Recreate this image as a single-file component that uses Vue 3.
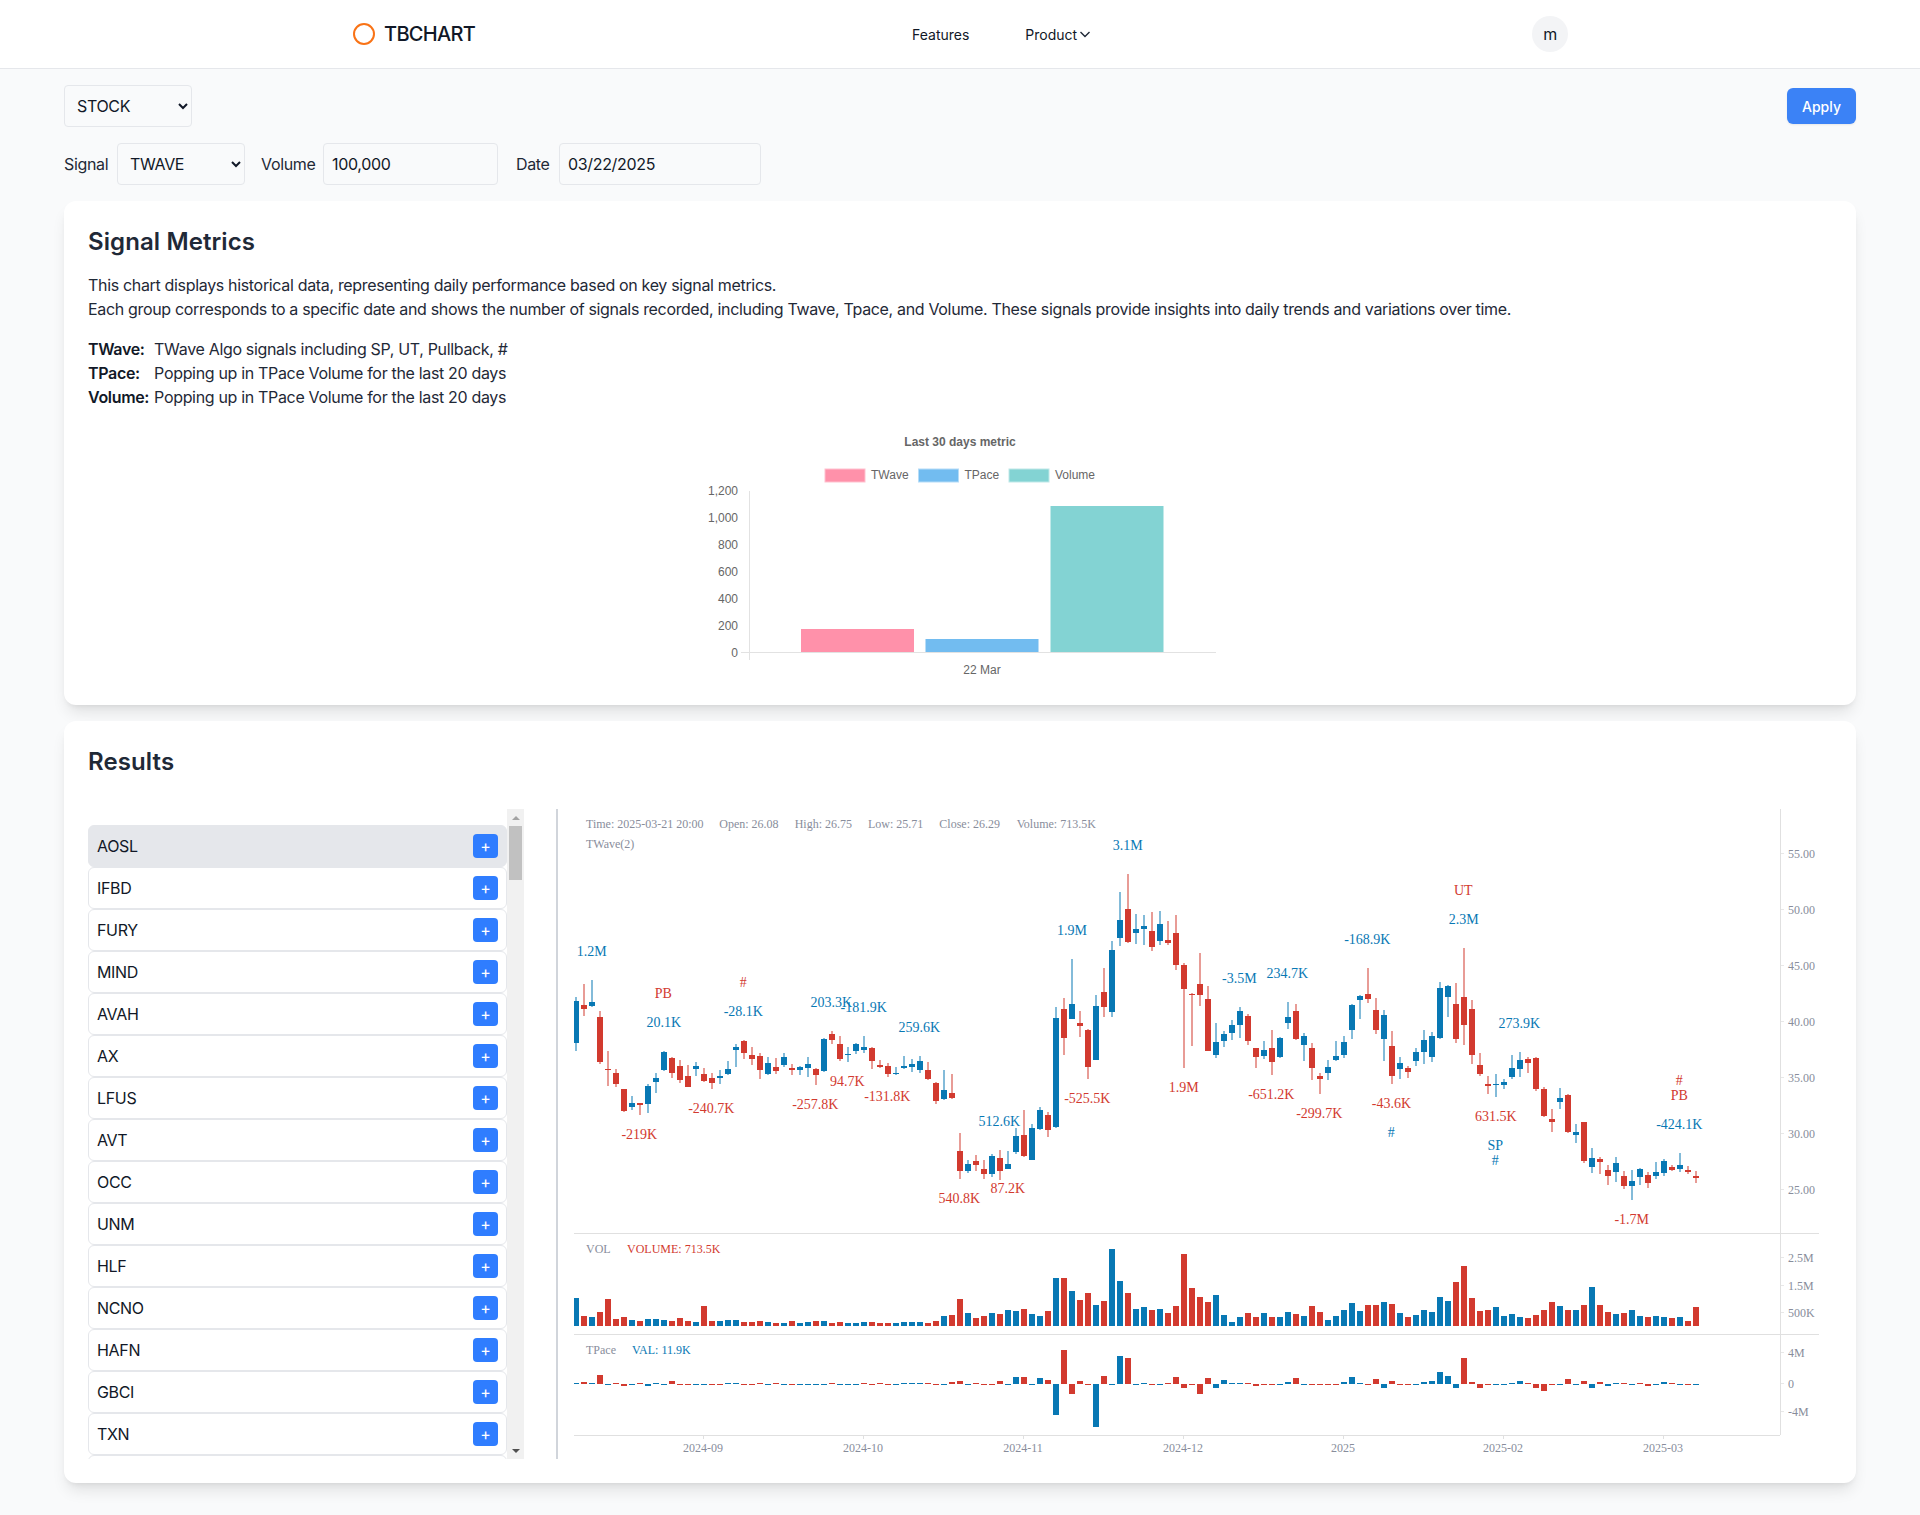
<template>
  <div class="page">
    <header class="topbar">
      <div class="topbar-inner">
        <div class="logo">
          <span class="logo-ring"></span>
          <span class="logo-text">TBCHART</span>
        </div>
        <nav class="nav">
          <a class="nav-link">Features</a>
          <a class="nav-link product">
            Product
            <svg width="12" height="12" viewBox="0 0 12 12"><path d="M1.5 4l4.5 4.5L10.5 4" fill="none" stroke="#1f2937" stroke-width="1.4" /></svg>
          </a>
        </nav>
        <div class="avatar">m</div>
      </div>
    </header>

    <main class="content">
      <div class="toolbar">
        <select class="field market">
          <option>STOCK</option>
          <option>ETF</option>
        </select>
        <button class="apply">Apply</button>
      </div>

      <div class="filters">
        <label class="filter-label signal-label">Signal</label>
        <select class="field market">
          <option>TWAVE</option>
          <option>TPACE</option>
        </select>
        <label class="filter-label volume-label">Volume</label>
        <input class="field volume" value="100,000" />
        <label class="filter-label date-label">Date</label>
        <input class="field date" value="03/22/2025" />
      </div>

      <section class="card">
        <h2 class="card-title">Signal Metrics</h2>
        <p class="intro">
          This chart displays historical data, representing daily performance based on key signal metrics.<br />
          Each group corresponds to a specific date and shows the number of signals recorded, including Twave, Tpace, and Volume. These signals provide insights into daily trends and variations over time.
        </p>
        <dl class="legend-text">
          <template v-for="d in definitions" :key="d.name">
            <dt>{{ d.name }}:</dt>
            <dd>{{ d.text }}</dd>
          </template>
        </dl>

        <svg class="metric-chart" viewBox="660 420 600 261" width="600" height="261">
          <text class="metric-title" x="960" y="445.5" text-anchor="middle">Last 30 days metric</text>
          <g v-for="l in metricLegend" :key="l.name">
            <rect :x="l.x" y="469" width="40" height="13" :fill="l.fill" :stroke="l.edge" />
            <text class="metric-label" :x="l.x + 46" y="479">{{ l.name }}</text>
          </g>
          <g v-for="(t, i) in metricTicks" :key="t">
            <text class="metric-label" x="738" :y="656.5 - i * 27" text-anchor="end">{{ t }}</text>
          </g>
          <path d="M749.5 491V660M741 652.5H1216" stroke="#e2e2e2" stroke-width="1" fill="none" />
          <rect v-for="b in metricBars" :key="b.x" :x="b.x" :y="b.y" width="113" :height="652 - b.y" :fill="b.fill" />
          <text class="metric-label" x="982" y="674" text-anchor="middle">22 Mar</text>
        </svg>
      </section>

      <section class="card">
        <h2 class="card-title">Results</h2>
        <div class="results">
          <div class="ticker-box">
            <div class="ticker-list">
              <div v-for="(t, i) in tickers" :key="t" class="ticker" :class="{ active: i === 0 }">
                <span>{{ t }}</span>
                <button class="add">+</button>
              </div>
              <!-- rest of the list, only its first border is ever on screen -->
              <div class="ticker-rest"></div>
            </div>
            <div class="scrollbar">
              <span class="arrow up"></span>
              <span class="thumb"></span>
              <span class="arrow down"></span>
            </div>
          </div>

          <div class="chart-pane">
            <svg class="kline" viewBox="558 809 1274 650" width="1274" height="650">
              <!-- pane frames -->
              <path d="M574 1233.5H1819M574 1334.5H1819M574 1435.5H1780M1780.5 809V1435" stroke="#e0e0e0" fill="none" />
              <path v-for="t in priceAxis" :key="t.label" :d="`M1781 ${t.y + 0.5}h3`" stroke="#e8e8e8" />
              <path v-for="t in timeAxis" :key="t.label" :d="`M${t.x + 0.5} 1436v3`" stroke="#e0e0e0" />

              <!-- candles -->
              <g v-for="c in candles" :key="c.x" :fill="c.color">
                <rect :x="c.x - 0.5" :y="c.high" width="1" :height="c.low - c.high" />
                <rect :x="c.left" :y="c.top" :width="c.right - c.left" :height="c.bottom - c.top" />
              </g>
              <rect v-for="b in volumeBars" :key="b.x" :x="b.x" :y="b.y" :width="b.w" :height="1326 - b.y" :fill="b.color" />
              <rect v-for="b in paceBars" :key="b.x" :x="b.x" :y="b.y" :width="b.w" :height="b.h" :fill="b.color" />

              <!-- signal labels -->
              <text v-for="l in signalLabels" :key="l.x + l.text" class="signal" :x="l.x" :y="l.y + 4.5" text-anchor="middle" :fill="l.color">{{ l.text }}</text>

              <!-- tooltip rows -->
              <text v-for="h in headerInfo" :key="h.text" class="axis" :x="h.x" y="827.5">{{ h.text }}</text>
              <text class="axis" x="586" y="847.5">TWave(2)</text>
              <text class="axis" x="586" y="1253">VOL</text>
              <text class="axis red" x="627" y="1253">VOLUME: 713.5K</text>
              <text class="axis" x="586" y="1353.5">TPace</text>
              <text class="axis blue" x="632" y="1353.5">VAL: 11.9K</text>

              <!-- axes -->
              <text v-for="t in priceAxis" :key="t.label" class="axis" x="1788" :y="t.y + 5">{{ t.label }}</text>
              <text v-for="t in timeAxis" :key="t.label" class="axis" :x="t.x" y="1452" text-anchor="middle">{{ t.label }}</text>
            </svg>
          </div>
        </div>
      </section>
    </main>
  </div>
</template>

<script setup>
const BLUE = '#0878b4'
const RED = '#d23a2f'

const definitions = [
  { name: 'TWave', text: 'TWave Algo signals including SP, UT, Pullback, #' },
  { name: 'TPace', text: 'Popping up in TPace Volume for the last 20 days' },
  { name: 'Volume', text: 'Popping up in TPace Volume for the last 20 days' }
]

const metricLegend = [
  { name: 'TWave', x: 825, fill: '#ff91aa', edge: '#ffc1cf' },
  { name: 'TPace', x: 918.5, fill: '#72bcf0', edge: '#b5dcf7' },
  { name: 'Volume', x: 1009, fill: '#83d3d3', edge: '#bfe8e8' }
]
const metricTicks = ['0', '200', '400', '600', '800', '1,000', '1,200']
const metricBars = [
  { x: 801, y: 629, fill: '#ff91aa' },
  { x: 925.5, y: 639, fill: '#72bcf0' },
  { x: 1050.5, y: 506, fill: '#83d3d3' }
]

const tickers = ['AOSL', 'IFBD', 'FURY', 'MIND', 'AVAH', 'AX', 'LFUS', 'AVT', 'OCC', 'UNM', 'HLF', 'NCNO', 'HAFN', 'GBCI', 'TXN']

// [color, high, bodyTop, bodyBottom, low], read off the chart at 3x, y origin 800
const rawCandles = [
  ['b',592,602,730,752],['r',552,614,628,648],['b',540,607,619,622],['r',633,650,787,792],['r',753,806,810,857],
  ['r',808,818,853,860],['r',868,868,934,935],['b',888,908,922,930],['r',908,910,915,945],['b',853,857,913,939],
  ['b',819,833,847,879],['b',754,755,811,812],['r',772,773,820,833],['r',780,797,841,848],['r',796,827,862,862],
  ['b',786,798,806,828],['r',804,821,844,845],['r',819,833,850,867],['b',810,829,835,852],['b',782,806,823,824],
  ['b',732,740,750,801],['r',720,722,760,777],['r',741,764,778,795],['r',759,767,810,837],['b',771,788,823,825],
  ['r',773,800,814,822],['b',759,770,794,801],['r',792,805,811,824],['b',798,802,810,824],['b',771,791,805,831],
  ['r',804,806,825,855],['b',715,716,814,815],['r',693,702,721,731],['r',709,732,778,782],['b',741,761,766,785],
  ['b',730,731,753,762],['b',708,740,750,758],['r',742,743,783,807],['r',781,794,802,804],['r',789,798,823,830],
  ['b',801,818,822,824],['b',768,799,805,808],['b',777,793,801,816],['b',769,782,810,818],['r',786,809,838,839],
  ['r',847,848,904,911],['b',810,869,898,899],['r',822,879,893,898],['r',999,1052,1114,1137],['b',1080,1091,1114,1118],
  ['r',1065,1082,1096,1112],['r',1080,1106,1122,1136],['b',1063,1068,1122,1132],['r',1050,1074,1113,1140],['b',1053,1092,1107,1108],
  ['b',985,1007,1057,1062],['r',930,1005,1068,1070],['b',973,983,1080,1081],['b',922,929,988,990],['r',937,945,990,1010],
  ['b',621,654,982,983],['r',594,626,714,765],['b',477,611,657,658],['r',633,668,678,710],['r',688,689,801,836],
  ['b',586,617,780,781],['r',504,575,621,650],['b',423,450,636,650],['b',276,359,414,437],['r',222,326,427,430],
  ['b',342,387,399,431],['b',345,377,387,434],['r',336,392,441,452],['b',333,371,424,434],['r',363,419,430,434],
  ['r',345,398,495,510],['r',490,494,567,804],['r',580,581,584,738],['r',460,552,585,617],['r',558,597,753,754],
  ['b',669,726,766,774],['b',693,702,723,740],['b',660,675,699,720],['b',621,633,675,714],['r',642,648,723,735],
  ['r',743,744,771,804],['b',723,750,768,776],['r',690,744,786,825],['b',712,714,771,774],['b',606,651,668,686],
  ['r',612,633,717,720],['b',699,708,735,782],['r',729,744,804,839],['r',819,828,836,882],['b',780,801,819,840],
  ['b',723,768,780,782],['b',708,726,765,774],['b',612,615,690,717],['b',585,588,600,657],['r',504,582,597,609],
  ['r',594,630,690,702],['b',630,645,717,783],['r',693,738,828,852],['b',771,788,807,837],['r',799,803,817,834],
  ['b',744,756,783,798],['b',690,720,756,792],['b',696,708,771,786],['b',546,564,714,717],['b',555,558,591,651],
  ['r',549,612,717,729],['r',444,591,675,735],['r',600,627,765,792],['r',759,795,822,828],['r',828,852,858,882],
  ['b',822,852,855,891],['b',838,846,855,866],['b',765,804,831,837],['b',756,780,807,831],['r',771,777,789,819],
  ['r',772,774,867,872],['r',862,867,948,950],['r',927,957,966,996],['b',864,894,906,927],['r',883,885,996,998],
  ['b',972,996,1004,1029],['r',965,966,1083,1088],['b',1044,1074,1101,1119],['r',1072,1077,1086,1122],['r',1095,1110,1128,1155],
  ['b',1071,1089,1116,1146],['r',1113,1128,1158,1166],['b',1110,1143,1158,1200],['b',1104,1107,1131,1155],['r',1116,1125,1149,1164],
  ['b',1086,1116,1128,1137],['b',1077,1083,1119,1128],['r',1095,1100,1110,1113],['b',1059,1095,1107,1116],['r',1098,1111,1116,1122],
  ['r',1114,1128,1134,1149]
]

const py = v => Math.round(800 + v / 3)
const barX = i => 576 + 8 * i

const candles = rawCandles.map(([c, high, top, bottom, low], i) => {
  const x = Math.round(barX(i))
  return {
    x,
    color: c === 'b' ? BLUE : RED,
    high: py(high),
    low: py(low),
    top: py(top),
    bottom: Math.max(py(bottom), py(top) + 1),
    left: Math.max(574, x - 3),
    right: x + 3
  }
})

// bar tops, same 3x reading, baseline 318 -> y 1326
const rawVolume = [
  234,288,291,276,237,297,291,300,303,297,297,300,303,294,303,306,258,303,303,300,
  300,306,306,303,306,309,309,303,309,306,303,303,309,306,309,309,306,306,309,309,
  309,306,306,306,309,303,288,285,237,279,294,288,279,282,270,273,267,282,288,273,
  174,174,213,240,219,255,243,87,183,219,267,261,270,267,279,258,102,204,
  231,246,225,285,306,291,279,291,279,291,291,276,282,288,258,276,300,288,270,249,
  273,255,255,246,252,279,291,285,270,276,231,243,186,138,234,273,270,261,288,282,
  291,294,285,270,246,258,270,270,255,201,255,276,282,279,270,288,291,288,291,294,
  291,303,261
]

const volumeBars = rawVolume.map((top, i) => {
  const left = Math.max(574, barX(i) - 3)
  return {
    x: left,
    w: barX(i) + 3 - left,
    y: Math.round(1220 + top / 3),
    color: rawCandles[i][0] === 'b' ? BLUE : RED
  }
})

// histogram values, positive is up from y 1384
const rawPace = [
  2,6,3,27,-3,3,-5,-3,2,-5,2,-3,9,-3,-3,-3,-3,-3,-3,2,
  2,-3,-3,2,-3,2,-3,-3,-3,-3,-3,-3,2,-3,-3,-3,2,-3,2,-3,
  -3,2,2,2,2,-3,-3,6,9,-3,2,-3,-3,9,-3,21,21,-3,18,12,
  -93,102,-30,9,-3,-129,24,-3,84,78,-3,2,-3,-3,2,21,-12,-3,-30,18,
  -12,12,2,2,2,-6,-3,-3,-3,6,18,-3,-3,-3,-3,-3,6,21,2,-3,
  15,-12,9,-3,-3,-3,6,9,36,24,-12,78,6,-12,-3,-3,-3,2,9,2,
  -12,-21,-3,-3,15,-3,9,-12,6,-6,2,2,-3,2,-6,-3,6,2,-3,-3,-3
]
const paceColors =
  'brbrbrrbrb' + 'bbrrrbbrrb' + 'brrrbrbrbb' + 'bbrbbbrrrr' + 'bbbbrrbrrb' + 'rrrrbbrbbr' + 'brrrrbrbbr' +
  'bbrbrrrrrr' + 'bbbbrrrrbb' + 'rbrrrrbbbr' + 'rbrrrbbbbb' + 'brrrrbbbbr' + 'rrrbrbrbrb' + 'brbrrbbrbrb'

const paceBars = rawPace.map((v, i) => {
  const h = Math.max(1, Math.round(Math.abs(v) / 3))
  const left = Math.max(574, barX(i) - 3)
  return {
    x: left,
    w: barX(i) + 3 - left,
    y: v > 0 ? 1384 - h : 1384,
    h,
    color: paceColors[i] === 'b' ? BLUE : RED
  }
})

const signalLabels = [
  ['1.2M', 591.7, 951, 'b'], ['PB', 663.3, 993, 'r'], ['20.1K', 663.7, 1022, 'b'], ['#', 743.3, 982, 'r'],
  ['-28.1K', 743.3, 1011, 'b'], ['203.3K', 831.3, 1002, 'b'], ['-181.9K', 863.7, 1007, 'b'], ['259.6K', 919.3, 1027, 'b'],
  ['94.7K', 847.3, 1081, 'r'], ['-131.8K', 887.3, 1096, 'r'], ['-257.8K', 815.3, 1104, 'r'], ['-240.7K', 711.3, 1108, 'r'],
  ['-219K', 639.3, 1134, 'r'], ['540.8K', 959.3, 1198, 'r'], ['3.1M', 1127.7, 845, 'b'], ['1.9M', 1072, 930, 'b'],
  ['-168.9K', 1367.3, 939, 'b'], ['-3.5M', 1239.3, 978, 'b'], ['234.7K', 1287.3, 973, 'b'], ['512.6K', 999.3, 1121, 'b'],
  ['87.2K', 1007.7, 1188, 'r'], ['-525.5K', 1087.3, 1098, 'r'], ['1.9M', 1183.7, 1087, 'r'], ['-651.2K', 1271.3, 1094, 'r'],
  ['-299.7K', 1319.3, 1113, 'r'], ['UT', 1463.3, 890, 'r'], ['2.3M', 1463.7, 919, 'b'], ['273.9K', 1519.3, 1023, 'b'],
  ['-43.6K', 1391.5, 1103, 'r'], ['#', 1391.3, 1132, 'b'], ['631.5K', 1495.7, 1116, 'r'], ['SP', 1495.3, 1145, 'b'],
  ['#', 1495.3, 1160, 'b'], ['#', 1679.3, 1080, 'r'], ['PB', 1679.3, 1095, 'r'], ['-424.1K', 1679.3, 1124, 'b'],
  ['-1.7M', 1631.7, 1219, 'r']
].map(([text, x, y, c]) => ({ text, x, y, color: c === 'b' ? BLUE : RED }))

const headerInfo = [
  { x: 586, text: 'Time: 2025-03-21 20:00' },
  { x: 719.3, text: 'Open: 26.08' },
  { x: 794.7, text: 'High: 26.75' },
  { x: 868, text: 'Low: 25.71' },
  { x: 939.3, text: 'Close: 26.29' },
  { x: 1016.7, text: 'Volume: 713.5K' }
]

const priceAxis = [
  { label: '55.00', y: 853 }, { label: '50.00', y: 909 }, { label: '45.00', y: 965 }, { label: '40.00', y: 1021 },
  { label: '35.00', y: 1077 }, { label: '30.00', y: 1133 }, { label: '25.00', y: 1189 },
  { label: '2.5M', y: 1257 }, { label: '1.5M', y: 1285 }, { label: '500K', y: 1312 },
  { label: '4M', y: 1352 }, { label: '0', y: 1383 }, { label: '-4M', y: 1411 }
]

const timeAxis = [
  { label: '2024-09', x: 703 }, { label: '2024-10', x: 863 }, { label: '2024-11', x: 1023 }, { label: '2024-12', x: 1183 },
  { label: '2025', x: 1343 }, { label: '2025-02', x: 1503 }, { label: '2025-03', x: 1663 }
]
</script>

<style>
html,
body {
  margin: 0;
  background: #f9fafb;
}
</style>

<style scoped>
.page {
  font-family: Inter, 'Noto Sans', sans-serif;
  font-size: 16px;
  letter-spacing: -0.33px;
  color: #111827;
  background: #f9fafb;
}

.topbar {
  background: #fff;
  border-bottom: 1px solid #e5e7eb;
}

.topbar-inner {
  max-width: 1280px;
  height: 68px;
  margin: 0 auto;
  padding: 0 32px;
  box-sizing: border-box;
  display: flex;
  align-items: center;
  justify-content: space-between;
}

.logo {
  display: flex;
  align-items: center;
  gap: 9px;
}

.logo-ring {
  width: 22px;
  height: 22px;
  margin-left: 1px;
  box-sizing: border-box;
  border: 2px solid #f97316;
  border-radius: 50%;
}

.logo-text {
  font-size: 20px;
  font-weight: 500;
  letter-spacing: -0.68px;
  color: #111827;
}

.nav {
  display: flex;
  gap: 56px;
  margin-right: 4px;
  letter-spacing: 0;
}

.nav-link {
  font-size: 14px;
  font-weight: 400;
  color: #111827;
}

.product {
  display: flex;
  align-items: center;
  gap: 2px;
}

.avatar {
  width: 36px;
  height: 36px;
  border-radius: 50%;
  background: #f3f4f6;
  display: flex;
  align-items: center;
  justify-content: center;
  font-size: 16px;
}

.content {
  padding: 16px 64px 32px;
}

.toolbar {
  display: flex;
  align-items: center;
  justify-content: space-between;
  margin-bottom: 16px;
}

.filters {
  display: flex;
  align-items: center;
  gap: 8px;
  margin-bottom: 16px;
}

.filter-label {
  color: #1f2937;
}

.signal-label {
  width: 45px;
}

.volume-label {
  width: 54px;
  margin-left: 8px;
}

.date-label {
  width: 35px;
  margin-left: 10px;
}

.field {
  height: 42px;
  box-sizing: border-box;
  border: 1px solid #e5e7eb;
  border-radius: 4px;
  background: #f9fafb;
  color: #111827;
  font: inherit;
  letter-spacing: inherit;
  outline: none;
}

.market {
  width: 128px;
  padding: 0 8px;
}

.volume {
  width: 175px;
  padding: 0 8px;
}

.date {
  width: 202px;
  padding: 0 8px;
}

.apply {
  width: 69px;
  height: 36px;
  border: none;
  border-radius: 6px;
  background: #3b82f6;
  color: #fff;
  font: inherit;
  font-size: 14px;
  font-weight: 500;
  box-shadow: 0 1px 2px rgba(0, 0, 0, 0.08);
}

.card {
  padding: 24px;
  margin-bottom: 16px;
  background: #fff;
  border-radius: 12px;
  box-shadow: 0 10px 15px -3px rgba(0, 0, 0, 0.1), 0 4px 6px -4px rgba(0, 0, 0, 0.1);
}

.card:last-child {
  margin-bottom: 0;
}

.card-title {
  margin: 1px 0 -1px;
  font-size: 24px;
  line-height: 32px;
  font-weight: 600;
  letter-spacing: 0.1px;
  color: #1f2937;
}

.intro {
  margin: 16px 0 0;
  line-height: 24px;
  color: #1f2937;
}

.legend-text {
  margin: 16px 0 0;
  display: grid;
  grid-template-columns: max-content 1fr;
  column-gap: 5px;
  line-height: 24px;
  color: #1f2937;
}

.legend-text dt {
  font-weight: 600;
  color: #111827;
}

.legend-text dd {
  margin: 0;
}

.metric-chart {
  display: block;
  margin: 11px auto 0;
  letter-spacing: 0;
}

.metric-title {
  font: bold 12px 'Liberation Sans', Arial, sans-serif;
  fill: #666;
}

.metric-label {
  font: 12px 'Liberation Sans', Arial, sans-serif;
  fill: #666;
}

.results {
  margin-top: 32px;
  height: 650px;
  display: flex;
  gap: 32px;
}

.ticker-box {
  width: 436px;
  flex: none;
  display: flex;
}

.ticker-list {
  flex: 1;
  min-width: 0;
  box-sizing: border-box;
  padding-top: 16px;
  overflow: hidden;
}

.scrollbar {
  width: 17px;
  flex: none;
  display: flex;
  flex-direction: column;
  align-items: center;
  background: #f1f1f1;
}

.arrow {
  height: 17px;
  flex: none;
  display: flex;
  align-items: center;
  justify-content: center;
}

.arrow::before {
  content: '';
  border-left: 4px solid transparent;
  border-right: 4px solid transparent;
}

.arrow.up::before {
  border-bottom: 4px solid #a3a3a3;
}

.arrow.down {
  margin-top: auto;
}

.arrow.down::before {
  border-top: 4px solid #505050;
}

.thumb {
  width: 13px;
  height: 54px;
  background: #c1c1c1;
}

.ticker {
  height: 42px;
  box-sizing: border-box;
  padding: 0 8px;
  border: 1px solid #e5e7eb;
  border-radius: 6px;
  display: flex;
  align-items: center;
  justify-content: space-between;
  background: #fff;
  color: #111827;
}

.ticker.active {
  background: #e5e7eb;
}

.ticker-rest {
  height: 42px;
  box-sizing: border-box;
  border: 1px solid #e5e7eb;
  border-radius: 6px;
}

.add {
  width: 25px;
  height: 24px;
  padding: 0;
  border: none;
  border-radius: 4px;
  background: #2f7dff;
  color: #fff;
  font: inherit;
  font-size: 16px;
  line-height: 24px;
}

.chart-pane {
  flex: 1;
  min-width: 0;
  border-left: 2px solid #d1d5db;
}

.kline {
  display: block;
  letter-spacing: 0;
}

.axis {
  font: 12px 'Liberation Serif', 'Times New Roman', serif;
  fill: #888d9b;
}

.axis.red {
  fill: #d23a2f;
}

.axis.blue {
  fill: #0878b4;
}

.signal {
  font: 14px 'Liberation Serif', 'Times New Roman', serif;
}
</style>
